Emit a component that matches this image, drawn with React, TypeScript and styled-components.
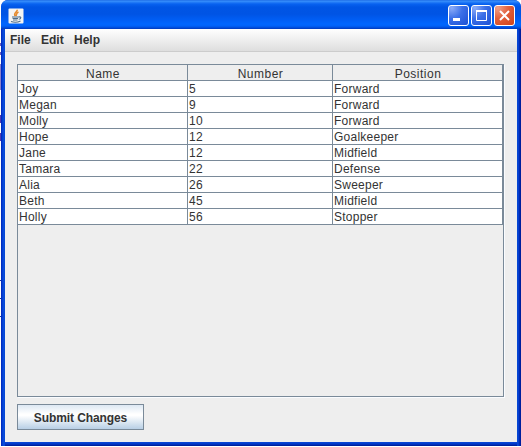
import React from "react";
import styled, { createGlobalStyle } from "styled-components";

const GlobalStyle = createGlobalStyle`
  *, *::before, *::after { box-sizing: border-box; }
  body {
    margin: 0;
    overflow: hidden;
    background: #fff;
    font: 12px/15px "Liberation Sans", Arial, sans-serif;
    color: #333;
  }
`;

const Desktop = styled.div`
  height: 447px;
  padding-left: 1px;
  background:
    linear-gradient(#6a5ac0, #6a5ac0) 0 43px / 1px 3px no-repeat,
    linear-gradient(#6a5ac0, #6a5ac0) 0 52px / 1px 3px no-repeat,
    linear-gradient(#8a80cc, #8a80cc) 0 64px / 1px 26px no-repeat,
    linear-gradient(#5038b0, #5038b0) 0 115px / 1px 8px no-repeat,
    linear-gradient(#5038b0, #5038b0) 0 133px / 1px 8px no-repeat,
    linear-gradient(#2038a0, #2038a0) 0 280px / 1px 1px no-repeat,
    linear-gradient(#2038a0, #2038a0) 0 298px / 1px 1px no-repeat,
    linear-gradient(#2038a0, #2038a0) 0 316px / 1px 1px no-repeat,
    #fff;
`;

const Frame = styled.main`
  width: 520px;
  height: 446px;
  display: flex;
  flex-direction: column;
  border-radius: 7px 7px 0 0;
  background: #0038cc;
  overflow: hidden;
`;

const TitleBar = styled.header`
  height: 29px;
  flex: none;
  display: flex;
  align-items: center;
  justify-content: space-between;
  padding: 2px 6px 0 7px;
  background: linear-gradient(
    #1460e0 0, #3a92fc 1px, #2880f8 2px, #0862f0 4px, #0055e5 7px,
    #0054e4 14px, #005cf2 19px, #0066fe 24px, #0062f8 26px, #0048d4 28px, #0038b8 29px
  );
`;

const Controls = styled.div`
  display: flex;
  gap: 2px;
`;

const Control = styled.button<{ $danger?: boolean }>`
  width: 21px;
  height: 21px;
  padding: 0;
  display: grid;
  place-items: center;
  border: 1px solid #fff;
  border-radius: 3px;
  background: ${(p) =>
    p.$danger
      ? "radial-gradient(circle at 15% 10%, #f0a088 0, #e2603c 45%, #d04218 100%)"
      : "radial-gradient(circle at 15% 10%, #8cacf8 0, #3c70e8 45%, #1c50d4 100%)"};
`;

const Body = styled.div`
  flex: 1;
  min-height: 0;
  padding: 0 4px 4px;
  background: linear-gradient(90deg, #0020b4 0, #0038cc 1px, #0c50e0 3px, #0040cc 4px,
    #0040cc 516px, #0c4cdc 517px, #0030c0 518px, #001890 520px);
`;

const Content = styled.div`
  height: 413px;
  display: flex;
  flex-direction: column;
  background: #eee;
`;

const MenuBar = styled.nav`
  height: 23px;
  flex: none;
  display: flex;
  gap: 11px;
  padding: 4px 5px 0;
  border-bottom: 1px solid #ccc;
  background: linear-gradient(#fff, #dedede);
  font-weight: bold;
`;

const MenuItem = styled.span<{ $width: number }>`
  width: ${(p) => p.$width}px;
  white-space: nowrap;
`;

const Workspace = styled.section`
  flex: 1;
  padding: 12px 12px 12px 12px;
  display: flex;
  flex-direction: column;
  align-items: flex-start;
  gap: 7px;
`;

const ScrollPane = styled.div`
  width: 487px;
  height: 333px;
  border: 1px solid #7a8a99;
  box-shadow: 1px 1px 0 #fafcff;
`;

const Table = styled.div`
  width: 485px;
  border-right: 1px solid #7a8a99;
`;

const Row = styled.div<{ $header?: boolean }>`
  height: 16px;
  display: grid;
  grid-template-columns: 170px 145px 169px;
  border-bottom: 1px solid #7a8a99;
  background: ${(p) => (p.$header ? "#eee" : "#fff")};
  text-align: ${(p) => (p.$header ? "center" : "left")};
  line-height: ${(p) => (p.$header ? "18px" : "16px")};
  letter-spacing: ${(p) => (p.$header ? "0.5px" : "0.25px")};
`;

const Cell = styled.div`
  height: 15px;
  padding-left: 1px;
  white-space: nowrap;

  &:not(:last-child) { border-right: 1px solid #7a8a99; }
`;

const SubmitButton = styled.button`
  width: 127px;
  height: 26px;
  padding: 2px 0 0;
  border: 1px solid #7a8a99;
  background: linear-gradient(#dde8f3 0, #fff 38%, #fff 44%, #b8cfe5 100%);
  color: #333;
  font: bold 12px/22px "Liberation Sans", Arial, sans-serif;
  letter-spacing: -0.1px;
`;

const BottomEdge = styled.div`
  height: 4px;
  background: linear-gradient(#0c48d8, #0038c8 50%, #001890);
`;

const columns = ["Name", "Number", "Position"];
const players = [
  ["Joy", "5", "Forward"],
  ["Megan", "9", "Forward"],
  ["Molly", "10", "Forward"],
  ["Hope", "12", "Goalkeeper"],
  ["Jane", "12", "Midfield"],
  ["Tamara", "22", "Defense"],
  ["Alia", "26", "Sweeper"],
  ["Beth", "45", "Midfield"],
  ["Holly", "56", "Stopper"],
];

function JavaIcon() {
  return (
    <svg width="16" height="16" viewBox="0 0 16 16" fill="none" aria-hidden="true">
      <rect x=".5" y=".5" width="15" height="15" rx="1" fill="#f4f4f2" />
      <path d="M9.3 1.8C9.5 4 5.2 4.8 7 8M10.5 4C7.8 5.2 9 6.2 8 8" stroke="#e58a2c" strokeWidth="1.5" />
      <path d="M4 9h6.5M4.6 10.5h5.4M5 12h4.5M10.5 9c3.4-.8 2.6 2.2.2 2.2M3 13.6c2.4.8 7 .7 9.5-.5" stroke="#4d6c88" strokeWidth="1.1" />
    </svg>
  );
}

export default function App() {
  return (
    <>
      <GlobalStyle />
      <Desktop>
        <Frame>
          <TitleBar>
            <JavaIcon />
            <Controls>
              <Control aria-label="Minimize">
                <svg width="19" height="19"><path d="M4 12h7v3H4z" fill="#fff" /></svg>
              </Control>
              <Control aria-label="Maximize">
                <svg width="19" height="19" fill="none"><path d="M4.5 5v9.5h10V5" stroke="#fff" /><path d="M4 5h11" stroke="#fff" strokeWidth="2" /></svg>
              </Control>
              <Control $danger aria-label="Close">
                <svg width="19" height="19"><path d="m5 5 9 9m0-9-9 9" stroke="#fff" strokeWidth="2" /></svg>
              </Control>
            </Controls>
          </TitleBar>
          <Body>
            <Content>
              <MenuBar>
                <MenuItem $width={20}>File</MenuItem>
                <MenuItem $width={22}>Edit</MenuItem>
                <MenuItem $width={26}>Help</MenuItem>
              </MenuBar>
              <Workspace>
                <ScrollPane>
                  <Table>
                    <Row $header>
                      {columns.map((name) => <Cell key={name}>{name}</Cell>)}
                    </Row>
                    {players.map((player) => (
                      <Row key={player[0]}>
                        {player.map((value, i) => <Cell key={i}>{value}</Cell>)}
                      </Row>
                    ))}
                  </Table>
                </ScrollPane>
                <SubmitButton>Submit Changes</SubmitButton>
              </Workspace>
            </Content>
            <BottomEdge />
          </Body>
        </Frame>
      </Desktop>
    </>
  );
}
